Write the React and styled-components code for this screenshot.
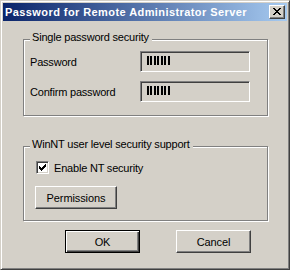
import React from 'react';
import styled, { createGlobalStyle, css } from 'styled-components';

const Global = createGlobalStyle`
  html, body { margin: 0; padding: 0; background: #d4d0c8; }
  body {
    font-family: "Liberation Sans", Arial, sans-serif;
    font-size: 11px;
    color: #000;
  }
  * { box-sizing: border-box; }
`;

const Window = styled.div`
  width: 290px;
  height: 270px;
  background: #d4d0c8;
  border: 1px solid;
  border-color: #d4d0c8 #404040 #404040 #d4d0c8;
  box-shadow: inset 1px 1px #fff, inset -1px -1px #808080;
  padding: 2px;
  display: flex;
  flex-direction: column;
`;

const TitleBar = styled.div`
  height: 18px;
  flex: none;
  display: flex;
  align-items: center;
  justify-content: space-between;
  padding: 0 2px 0 2px;
  background: linear-gradient(to right, #0a246a, #a6caf0);
`;

const TitleText = styled.span`
  color: #fff;
  font-weight: bold;
  font-size: 11px;
  letter-spacing: 0.42px;
  white-space: nowrap;
`;

const raised = css`
  border: 1px solid;
  border-color: #fff #404040 #404040 #fff;
  box-shadow: inset -1px -1px #808080;
  background: #d4d0c8;
`;

const CloseButton = styled.div`
  ${raised};
  width: 16px;
  height: 14px;
  display: flex;
  align-items: center;
  justify-content: center;
  padding: 0 1px 1px 0;
`;

const Client = styled.div`
  flex: 1;
  display: flex;
  flex-direction: column;
  padding: 18px 19px 0 20px;
`;

const Group = styled.div`
  position: relative;
  border: 1px solid #808080;
  box-shadow: inset 1px 1px #fff, 1px 1px #fff;
  margin-top: ${(p) => p.$gap || 0}px;
  padding: ${(p) => p.$pad};
`;

const Caption = styled.span`
  position: absolute;
  top: -9px;
  left: 6px;
  height: 13px;
  line-height: 13px;
  padding: 0 3px 0 2px;
  background: #d4d0c8;
  letter-spacing: -0.2px;
  white-space: nowrap;
`;

const FieldGrid = styled.div`
  display: grid;
  grid-template-columns: 110px 110px;
  row-gap: 9px;
  align-items: center;
`;

const Label = styled.span`
  letter-spacing: -0.2px;
  white-space: nowrap;
`;

const PasswordBox = styled.div`
  height: 21px;
  border: 1px solid;
  border-color: #808080 #fff #fff #808080;
  box-shadow: inset 1px 1px #404040, inset -1px -1px #d4d0c8;
  background: #d4d0c8;
  padding: 4px 0 0 6px;
  display: flex;
  align-items: flex-start;
`;

const CheckRow = styled.label`
  display: flex;
  align-items: center;
  gap: 5px;
  height: 13px;
  margin-left: 1px;
`;

const CheckBox = styled.span`
  width: 13px;
  height: 13px;
  flex: none;
  border: 1px solid;
  border-color: #808080 #fff #fff #808080;
  box-shadow: inset 1px 1px #404040, inset -1px -1px #d4d0c8;
  background: #fff;
  display: flex;
  padding: 2px 0 0 2px;
`;

const Button = styled.div`
  ${raised};
  width: ${(p) => p.$w || 75}px;
  height: 23px;
  display: flex;
  align-items: center;
  justify-content: center;
  letter-spacing: -0.1px;
  ${(p) =>
    p.$default &&
    css`
      border: 1px solid #000;
      box-shadow: inset 1px 1px #fff, inset -1px -1px #404040, inset -2px -2px #808080;
    `}
`;

const GroupButtonRow = styled.div`
  margin-top: 12px;
`;

const ButtonRow = styled.div`
  display: flex;
  gap: 36px;
  padding-left: 42px;
  margin-top: 9px;
`;

const pixelsToRects = (rows) =>
  rows.flatMap((r, y) =>
    r.split('').map((c, x) =>
      c === 'X' ? <rect key={`${x}-${y}`} x={x} y={y} width="1" height="1" /> : null
    )
  );

const CloseGlyph = () => (
  <svg width="8" height="7" viewBox="0 0 8 7" shapeRendering="crispEdges" fill="#000">
    {pixelsToRects([
      'XX....XX',
      '.XX..XX.',
      '..XXXX..',
      '...XX...',
      '..XXXX..',
      '.XX..XX.',
      'XX....XX',
    ])}
  </svg>
);

const CheckGlyph = () => (
  <svg width="7" height="7" viewBox="0 0 7 7" shapeRendering="crispEdges" fill="#000">
    {pixelsToRects([
      '......X',
      '.....XX',
      'X...XXX',
      'XX.XXX.',
      'XXXXX..',
      '.XXX...',
      '..X....',
    ])}
  </svg>
);

const Dots = () => (
  <svg width="23" height="9" viewBox="0 0 23 9" shapeRendering="crispEdges" fill="#000">
    {[0, 3, 7, 10, 14, 17, 21].map((x) => (
      <rect key={x} x={x} y="0" width="2" height="9" />
    ))}
  </svg>
);

export default function App() {
  return (
    <>
      <Global />
      <Window>
        <TitleBar>
          <TitleText>Password for Remote Administrator Server</TitleText>
          <CloseButton>
            <CloseGlyph />
          </CloseButton>
        </TitleBar>
        <Client>
          <Group $pad="11px 0 13px 6px">
            <Caption>Single password security</Caption>
            <FieldGrid>
              <Label>Password</Label>
              <PasswordBox>
                <Dots />
              </PasswordBox>
              <Label>Confirm password</Label>
              <PasswordBox>
                <Dots />
              </PasswordBox>
            </FieldGrid>
          </Group>
          <Group $gap={30} $pad="14px 0 11px 11px">
            <Caption>WinNT user level security support</Caption>
            <CheckRow>
              <CheckBox>
                <CheckGlyph />
              </CheckBox>
              <Label>Enable NT security</Label>
            </CheckRow>
            <GroupButtonRow>
              <Button $w={82}>Permissions</Button>
            </GroupButtonRow>
          </Group>
          <ButtonRow>
            <Button $default>OK</Button>
            <Button>Cancel</Button>
          </ButtonRow>
        </Client>
      </Window>
    </>
  );
}
